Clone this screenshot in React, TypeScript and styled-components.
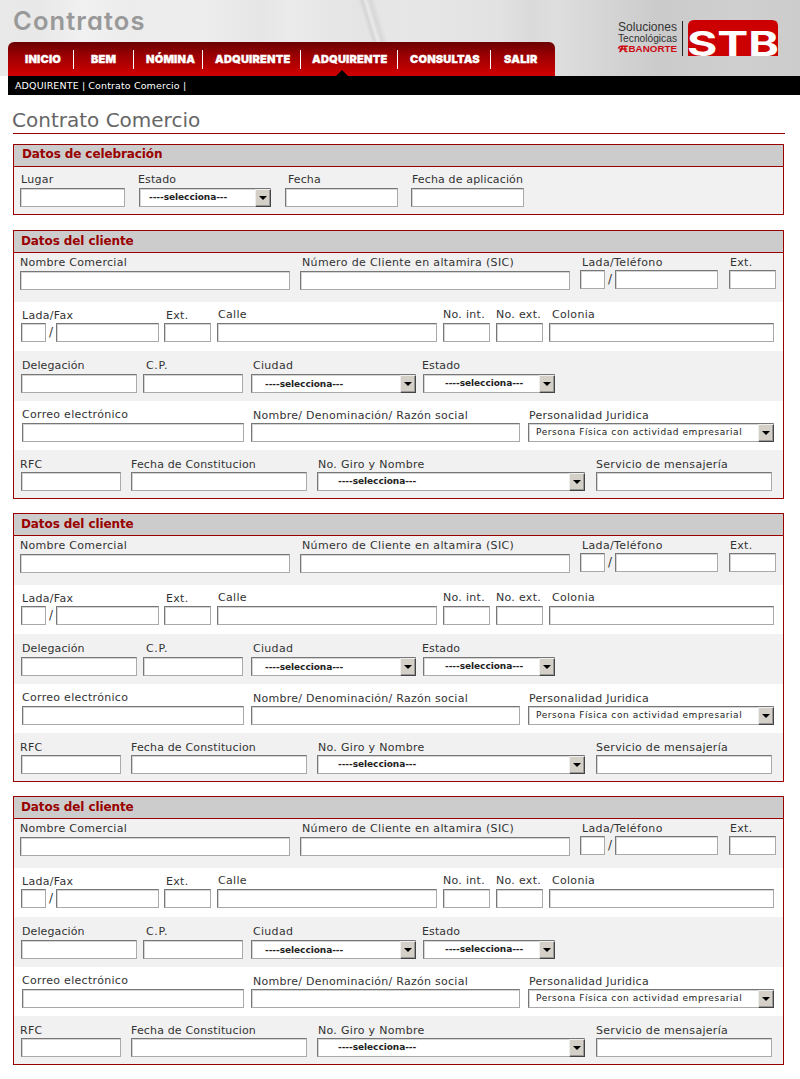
import React from "react";
import styled, { createGlobalStyle } from "styled-components";

const GlobalStyle = createGlobalStyle`
  html, body { margin: 0; padding: 0; background: #fff; }
  * { box-sizing: border-box; }
`;

const sans = `"DejaVu Sans", Verdana, sans-serif`;

const Page = styled.div`
  width: 800px;
  height: 1079px;
  overflow: hidden;
  font-family: ${sans};
  background: #fff;
`;

const Header = styled.header`
  height: 76px;
  display: flex;
  justify-content: space-between;
  background:
    linear-gradient(73deg, transparent 0 46.3%, rgba(195,195,195,.45) 46.8%, rgba(255,255,255,.2) 47.2%, rgba(195,195,195,.4) 47.7%, transparent 48.4%),
    linear-gradient(90deg, #e9e9e9 0, #e8e8e8 40px, #f1f1f1 85px, #ececec 130px, #ededed 200px, #e6e6e6 262px, #ebebeb 290px, #e4e4e4 360px, #e7e7e7 400px, #e2e2e2 500px, #dadada 530px, #dedede 555px, #d4d4d4 610px, #cbcbcb 660px, #cfcfcf 740px, #cccccc 800px);
`;

const HeaderLeft = styled.div`
  display: flex;
  flex-direction: column;
  justify-content: space-between;
`;

const Brand = styled.div`
  padding: 6px 0 0 13px;
  height: 36px;
  font: 600 25.5px/30px Inter, sans-serif;
  font-feature-settings: "cv11";
  letter-spacing: 1.1px;
  color: #999;
`;

const Nav = styled.nav`
  display: flex;
  align-items: flex-start;
  width: 547px;
  height: 34px;
  margin-left: 8px;
  padding-top: 8px;
  border-radius: 6px 6px 0 0;
  background: linear-gradient(#6a0003, #9b0002 40%, #cc0000 95%);
`;

const NavItem = styled.a<{ $w: number; $pad: number; $ls?: number }>`
  position: relative;
  width: ${(p) => p.$w}px;
  height: 19px;
  padding-left: ${(p) => p.$pad}px;
  border-right: 1px solid #fff;
  font: 900 11px/19px Inter, sans-serif;
  letter-spacing: ${(p) => p.$ls ?? 0.2}px;
  -webkit-text-stroke: 0.3px #fff;
  white-space: nowrap;
  color: #fff;
  &:last-child { border-right: 0; }
`;

const Pointer = styled.span`
  position: absolute;
  left: 35px;
  top: 20px;
  border: 6px solid transparent;
  border-top: 0;
  border-bottom-color: #000;
`;

const Logo = styled.svg`
  display: block;
  margin: 14px 12px 0 0;
`;

const Crumbs = styled.div`
  height: 19px;
  margin-left: 8px;
  padding-left: 7px;
  background: #000;
  color: #fff;
  font-size: 9.5px;
  line-height: 19px;
  letter-spacing: 0.12px;
`;

const Title = styled.h1`
  width: 772px;
  height: 39px;
  margin: 0 0 10px 13px;
  padding-top: 11px;
  border-bottom: 1px solid #990000;
  font-size: 20px;
  line-height: 28px;
  font-weight: 400;
  letter-spacing: 0;
  text-indent: -1px;
  color: #666;
`;

const Panel = styled.section<{ $gap: number }>`
  width: 771px;
  margin: 0 0 ${(p) => p.$gap}px 13px;
  border: 1px solid #990000;
`;

const PanelHead = styled.h2<{ $pad: number; $line: number }>`
  height: 22px;
  margin: 0;
  padding-left: ${(p) => p.$pad}px;
  border-bottom: 1px solid #990000;
  background: #ccc;
  color: #990000;
  font-size: 12px;
  line-height: ${(p) => p.$line}px;
  font-weight: 700;
  letter-spacing: -0.1px;
`;

const Row = styled.div<{ $h: number; $fields: number; $shade?: boolean }>`
  display: flex;
  height: ${(p) => p.$h}px;
  padding-bottom: ${(p) => p.$h - p.$fields}px;
  background: ${(p) => (p.$shade ? "#f1f1f1" : "#fff")};
`;

const FieldBox = styled.div<{ $gap: number; $w: number; $lift: number }>`
  flex: none;
  display: flex;
  flex-direction: column;
  justify-content: flex-end;
  width: ${(p) => p.$w}px;
  margin-left: ${(p) => p.$gap}px;
  padding-bottom: ${(p) => p.$lift}px;
`;

const Label = styled.label<{ $dx: number; $below: number; $ls: number }>`
  height: 14px;
  margin: 0 0 ${(p) => p.$below}px ${(p) => p.$dx}px;
  font-size: 11px;
  line-height: 14px;
  letter-spacing: ${(p) => p.$ls}px;
  white-space: nowrap;
  color: #333;
`;

const Controls = styled.div`
  display: flex;
  height: 19px;
`;

const Box = styled.div<{ $w: number }>`
  display: flex;
  width: ${(p) => p.$w}px;
  height: 19px;
  border: 1px solid;
  border-color: #777 #aaa #aaa #777;
  background: #fff;
  box-shadow: inset 1px 1px 0 #d4d4d4;
`;

const Slash = styled.span`
  width: 10px;
  font-size: 12px;
  line-height: 19px;
  text-align: center;
  color: #333;
`;

const Value = styled.span<{ $pad: number; $bold: boolean; $dy: number }>`
  flex: 1;
  padding: ${(p) => p.$dy}px 0 0 ${(p) => p.$pad}px;
  font-size: 9px;
  line-height: 16px;
  font-weight: ${(p) => (p.$bold ? 700 : 400)};
  letter-spacing: ${(p) => (p.$bold ? -0.06 : 0.57)}px;
  white-space: nowrap;
  color: #222;
`;

const Arrow = styled.span`
  display: flex;
  align-items: center;
  justify-content: center;
  width: 16px;
  height: 18px;
  margin-right: -1px;
  border: 1px solid;
  border-color: #eee #444 #444 #eee;
  background: #d4d0c8;
  box-shadow: inset -1px -1px 0 #999;
  &::after {
    content: "";
    border: 4px solid transparent;
    border-top-color: #000;
    border-bottom: 0;
  }
`;

type FieldDef = {
  label: string;
  gap: number;
  w: number;
  dx?: number;
  below?: number;
  lift?: number;
  ls?: number;
  phone?: boolean;
  value?: string;
  pad?: number;
  plain?: boolean;
  dy?: number;
};

type RowDef = { h: number; fields: number; shade?: boolean; items: FieldDef[] };

const PICK = "----selecciona---";

const celebration: RowDef[] = [
  {
    h: 47, fields: 40, shade: true,
    items: [
      { label: "Lugar", gap: 6, w: 105, dx: 1 },
      { label: "Estado", gap: 14, w: 132, dx: -1, ls: 0.1, value: PICK, pad: 9 },
      { label: "Fecha", gap: 14, w: 113, dx: 3, ls: 0.1 },
      { label: "Fecha de aplicación", gap: 13, w: 113, dx: 1, ls: 0.14 },
    ],
  },
];

const client: RowDef[] = [
  {
    h: 49, fields: 37, shade: true,
    items: [
      { label: "Nombre Comercial", gap: 6, w: 270 },
      { label: "Número de Cliente en altamira (SIC)", gap: 10, w: 270, dx: 2, ls: 0.36 },
      { label: "Lada/Teléfono", gap: 10, w: 138, dx: 2, below: 0, lift: 1, ls: 0.36, phone: true },
      { label: "Ext.", gap: 11, w: 47, dx: 1, below: 0, lift: 1 },
    ],
  },
  {
    h: 49, fields: 40,
    items: [
      { label: "Lada/Fax", gap: 7, w: 138, dx: 1, below: 0, phone: true },
      { label: "Ext.", gap: 5, w: 47, dx: 2, below: 0 },
      { label: "Calle", gap: 6, w: 220, dx: 1 },
      { label: "No. int.", gap: 6, w: 47 },
      { label: "No. ext.", gap: 6, w: 47 },
      { label: "Colonia", gap: 6, w: 225, dx: 3 },
    ],
  },
  {
    h: 50, fields: 42, shade: true,
    items: [
      { label: "Delegación", gap: 7, w: 116, dx: 1, ls: 0.1 },
      { label: "C.P.", gap: 6, w: 100, dx: 3, ls: 0.6 },
      { label: "Ciudad", gap: 8, w: 165, dx: 2, value: PICK, pad: 13, dy: 1 },
      { label: "Estado", gap: 7, w: 132, dx: -1, ls: 0.1, value: PICK, pad: 21 },
    ],
  },
  {
    h: 49, fields: 41,
    items: [
      { label: "Correo electrónico", gap: 8, w: 222 },
      { label: "Nombre/ Denominación/ Razón social", gap: 7, w: 269, dx: 2, below: 0, ls: 0.27 },
      { label: "Personalidad Juridica", gap: 8, w: 246, dx: 1, below: 0, ls: 0.25, value: "Persona Física con actividad empresarial", pad: 7, plain: true },
    ],
  },
  {
    h: 48, fields: 41, shade: true,
    items: [
      { label: "RFC", gap: 7, w: 100, dx: -1, below: 0 },
      { label: "Fecha de Constitucion", gap: 10, w: 176, below: 0, ls: 0.16 },
      { label: "No. Giro y Nombre", gap: 10, w: 268, dx: 1, below: 0, value: PICK, pad: 20 },
      { label: "Servicio de mensajería", gap: 11, w: 176, below: 0 },
    ],
  },
];

function Field({ f }: { f: FieldDef }) {
  return (
    <FieldBox $gap={f.gap} $w={f.w} $lift={f.lift ?? 0}>
      <Label $dx={f.dx ?? 0} $below={f.below ?? 1} $ls={f.ls ?? 0.3}>{f.label}</Label>
      <Controls>
        {f.phone ? (
          <>
            <Box $w={25} />
            <Slash>/</Slash>
            <Box $w={103} />
          </>
        ) : (
          <Box $w={f.w}>
            {f.value && (
              <>
                <Value $pad={f.pad ?? 8} $bold={!f.plain} $dy={f.dy ?? 0}>{f.value}</Value>
                <Arrow />
              </>
            )}
          </Box>
        )}
      </Controls>
    </FieldBox>
  );
}

type PanelProps = { title: string; rows: RowDef[]; gap?: number; pad?: number; line?: number };

function FormPanel({ title, rows, gap = 14, pad = 7, line = 20 }: PanelProps) {
  return (
    <Panel $gap={gap}>
      <PanelHead $pad={pad} $line={line}>{title}</PanelHead>
      {rows.map((r, i) => (
        <Row key={i} $h={r.h} $fields={r.fields} $shade={r.shade}>
          {r.items.map((f, j) => <Field key={j} f={f} />)}
        </Row>
      ))}
    </Panel>
  );
}

const menu = [
  { t: "INICIO", w: 66, pad: 17 },
  { t: "BEM", w: 60, pad: 17 },
  { t: "NÓMINA", w: 69, pad: 12 },
  { t: "ADQUIRENTE", w: 98, pad: 12 },
  { t: "ADQUIRENTE", w: 97, pad: 11, active: true },
  { t: "CONSULTAS", w: 93, pad: 12 },
  { t: "SALIR", w: 64, pad: 13 },
];

export default function App() {
  return (
    <Page>
      <GlobalStyle />
      <Header>
        <HeaderLeft>
          <Brand>Contratos</Brand>
          <Nav>
            {menu.map((m, i) => (
              <NavItem key={i} $w={m.w} $pad={m.pad}>
                {m.t}
                {m.active && <Pointer />}
              </NavItem>
            ))}
          </Nav>
        </HeaderLeft>
        <Logo width="172" height="48" viewBox="616 14 172 48">
          <g fontFamily="Liberation Sans, Arial, sans-serif" fill="#333">
            <text x="618" y="31" fontSize="12" textLength="59" lengthAdjust="spacingAndGlyphs">Soluciones</text>
            <text x="618" y="42" fontSize="11" textLength="59" lengthAdjust="spacingAndGlyphs">Tecnológicas</text>
            <text x="628.5" y="52" fontSize="8.5" fontWeight="700" fill="#cc0a14" textLength="48.5" lengthAdjust="spacingAndGlyphs">BANORTE</text>
          </g>
          <path d="M618.3 48.6q.8-2.4 3.2-2.4h6.3M619.5 48.9h7.3M622.3 46.4q-.2 4.2-3 5.4M625 46.4v4.2q.2 1.4 2.4.6" fill="none" stroke="#cc0a14" strokeWidth="1.5" />
          <path d="M682.5 21v35" stroke="#222" />
          <path d="M688 56V26q0-6 6-6h78q6 0 6 6v30z" fill="#cc0000" />
          <text x="687" y="55.7" fontFamily="Inter, sans-serif" fontWeight="700" fontSize="33.5" fill="#fff" textLength="92" lengthAdjust="spacingAndGlyphs">STB</text>
        </Logo>
      </Header>
      <Crumbs>ADQUIRENTE | Contrato Comercio |</Crumbs>
      <Title>Contrato Comercio</Title>
      <FormPanel title="Datos de celebración" rows={celebration} gap={15} pad={8} line={19} />
      <FormPanel title="Datos del cliente" rows={client} />
      <FormPanel title="Datos del cliente" rows={client} />
      <FormPanel title="Datos del cliente" rows={client} />
    </Page>
  );
}
